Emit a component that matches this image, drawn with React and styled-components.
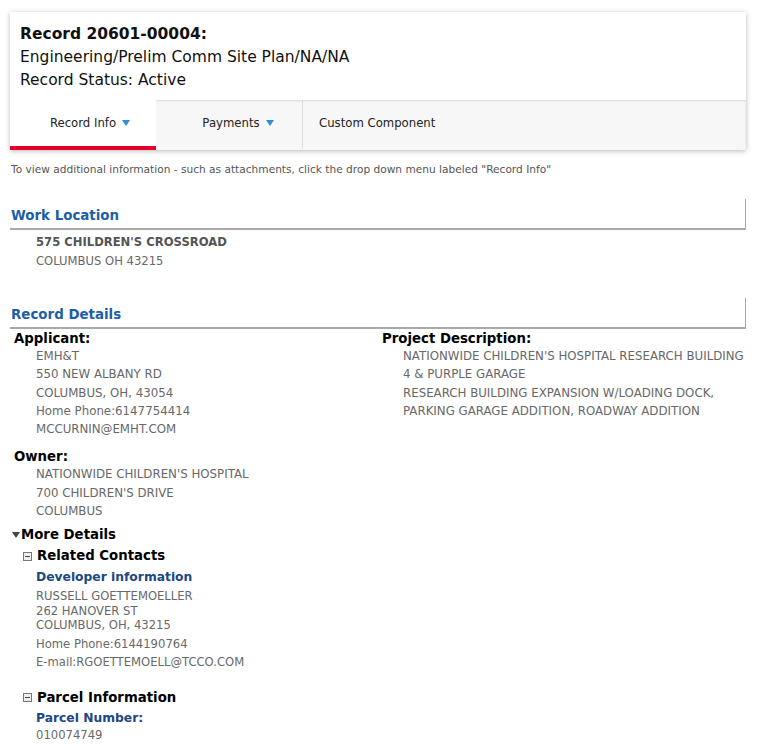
import React from 'react'
import styled, { createGlobalStyle } from 'styled-components'

const GlobalStyle = createGlobalStyle`
  html, body { margin: 0; padding: 0; background: #fff; }
  body { font-family: "DejaVu Sans", Verdana, sans-serif; color: #333; }
`

const Page = styled.div`
  padding: 12px 19px 0 10px;
`

const Card = styled.div`
  background: #fff;
  box-shadow: 0 1px 5px rgba(0, 0, 0, 0.28);
`

const HeaderBox = styled.div`
  padding: 11px 10px 8px;
  font-size: 15.5px;
  line-height: 23px;
  color: #111;
`

const Title = styled.div`
  font-weight: bold;
`

const TabBar = styled.div`
  display: flex;
  height: 50px;
  background: #f7f7f7;
  box-shadow: inset 0 1px 2px rgba(0, 0, 0, 0.12);
`

const Tab = styled.div`
  display: flex;
  align-items: center;
  justify-content: ${p => (p.$left ? 'flex-start' : 'center')};
  width: ${p => p.$w}px;
  padding-left: ${p => p.$pl}px;
  box-sizing: border-box;
  font-size: 11.7px;
  color: #222;
  background: ${p => (p.$active ? '#fff' : 'transparent')};
  border-bottom: 4px solid ${p => (p.$active ? '#e4002b' : 'transparent')};
  border-right: ${p => (p.$sep ? '1px solid #ddd' : 'none')};
`

const Caret = styled.span`
  display: inline-block;
  margin-left: 6px;
  width: 0;
  height: 0;
  border-left: 4.5px solid transparent;
  border-right: 4.5px solid transparent;
  border-top: 6px solid #2a8fd6;
`

const Note = styled.div`
  margin-top: 13px;
  font-size: 10.6px;
  color: #555;
  padding-left: 1px;
`

const SectionHead = styled.div`
  margin-top: ${p => p.$mt}px;
  height: 31px;
  display: flex;
  align-items: flex-end;
  padding: 0 0 5px 1px;
  box-sizing: border-box;
  border-bottom: 2px solid #a9a9a9;
  border-right: 1px solid #a9a9a9;
  font-size: 13.4px;
  font-weight: bold;
  color: #1c5ea8;
`

const Address = styled.div`
  padding: 3px 0 0 26px;
  font-size: 11.6px;
  line-height: 19px;
  color: #686868;
`

const Street = styled.div`
  font-weight: bold;
  color: #555;
`

const Columns = styled.div`
  display: grid;
  grid-template-columns: 372px 1fr;
`

const Label = styled.div`
  font-size: 13.3px;
  font-weight: bold;
  color: #000;
  padding-left: ${p => (p.$flush ? 0 : 4)}px;
  margin-top: ${p => p.$mt || 0}px;
  line-height: 19px;
`

const Values = styled.div`
  padding-left: ${p => p.$pl || 26}px;
  margin-top: -1px;
  font-size: 11.8px;
  line-height: 18.25px;
  color: #686868;
`

const MoreDetails = styled.div`
  display: flex;
  align-items: center;
  margin-top: 5px;
  font-size: 13.3px;
  font-weight: bold;
  color: #000;
  line-height: 20px;
`

const DownTri = styled.span`
  display: inline-block;
  margin: 0 1px 0 2px;
  width: 0;
  height: 0;
  border-left: 4.5px solid transparent;
  border-right: 4.5px solid transparent;
  border-top: 6px solid #444;
`

const Group = styled.div`
  padding-left: 13px;
  margin-top: ${p => p.$mt || 0}px;
`

const GroupHead = styled.div`
  display: flex;
  align-items: center;
  gap: 5px;
  font-size: 13.3px;
  font-weight: bold;
  color: #000;
  line-height: 22px;
`

const MinusBox = styled.span`
  position: relative;
  display: inline-block;
  width: 7px;
  height: 7px;
  border: 1px solid #777;
  background: #eee;
  &::after {
    content: '';
    position: absolute;
    left: 1px;
    right: 1px;
    top: 3px;
    height: 1px;
    background: #444;
  }
`

const SubLabel = styled.div`
  padding-left: 13px;
  margin-top: ${p => p.$mt || 0}px;
  font-size: 12.3px;
  font-weight: bold;
  color: #1b4784;
  line-height: 20px;
`

const ContactLines = styled.div`
  padding-left: 13px;
  font-size: 11.6px;
  line-height: 14.5px;
  color: #686868;
  margin-top: 2px;
`

const ContactMeta = styled.div`
  padding-left: 13px;
  font-size: 11.6px;
  line-height: 18px;
  color: #686868;
  margin-top: ${p => p.$mt || 0}px;
`

const lines = arr => arr.map(l => <div key={l}>{l}</div>)

export default function App() {
  return (
    <>
      <GlobalStyle />
      <Page>
        <Card>
          <HeaderBox>
            <Title>Record 20601-00004:</Title>
            <div>Engineering/Prelim Comm Site Plan/NA/NA</div>
            <div>Record Status: Active</div>
          </HeaderBox>
          <TabBar>
            <Tab $w={146} $pl={14} $active>
              Record Info<Caret />
            </Tab>
            <Tab $w={147} $pl={18} $sep>
              Payments<Caret />
            </Tab>
            <Tab $w={200} $pl={16} $left>Custom Component</Tab>
          </TabBar>
        </Card>

        <Note>
          To view additional information - such as attachments, click the drop down menu labeled "Record Info"
        </Note>

        <SectionHead $mt={24}>Work Location</SectionHead>
        <Address>
          <Street>575 CHILDREN'S CROSSROAD</Street>
          <div>COLUMBUS OH 43215</div>
        </Address>

        <SectionHead $mt={27}>Record Details</SectionHead>
        <Columns>
          <div>
            <Label>Applicant:</Label>
            <Values>
              {lines(['EMH&T', '550 NEW ALBANY RD', 'COLUMBUS, OH, 43054', 'Home Phone:6147754414', 'MCCURNIN@EMHT.COM'])}
            </Values>
            <Label $mt={9}>Owner:</Label>
            <Values>
              {lines(["NATIONWIDE CHILDREN'S HOSPITAL", "700 CHILDREN'S DRIVE", 'COLUMBUS'])}
            </Values>
          </div>
          <div>
            <Label $flush>Project Description:</Label>
            <Values $pl={21}>
              {lines([
                "NATIONWIDE CHILDREN'S HOSPITAL RESEARCH BUILDING",
                '4 & PURPLE GARAGE',
                'RESEARCH BUILDING EXPANSION W/LOADING DOCK,',
                'PARKING GARAGE ADDITION, ROADWAY ADDITION',
              ])}
            </Values>
          </div>
        </Columns>

        <MoreDetails>
          <DownTri />More Details
        </MoreDetails>

        <Group>
          <GroupHead>
            <MinusBox />Related Contacts
          </GroupHead>
          <SubLabel>Developer information</SubLabel>
          <ContactLines>
            {lines(['RUSSELL GOETTEMOELLER', '262 HANOVER ST', 'COLUMBUS, OH, 43215'])}
          </ContactLines>
          <ContactMeta $mt={2}>
            {lines(['Home Phone:6144190764', 'E-mail:RGOETTEMOELL@TCCO.COM'])}
          </ContactMeta>
        </Group>

        <Group $mt={16}>
          <GroupHead>
            <MinusBox />Parcel Information
          </GroupHead>
          <SubLabel $mt={-1}>Parcel Number:</SubLabel>
          <ContactMeta $mt={-2}>
            <div>010074749</div>
          </ContactMeta>
        </Group>
      </Page>
    </>
  )
}
